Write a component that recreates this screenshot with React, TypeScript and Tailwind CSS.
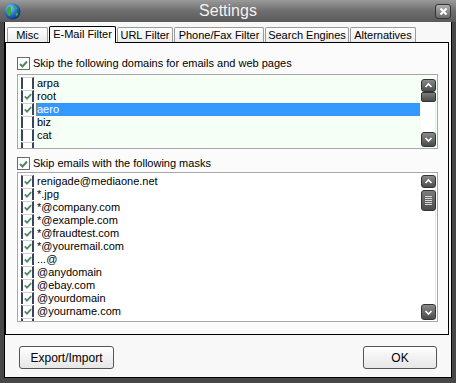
import React from 'react';

const font = "font-['Liberation_Sans',Arial,sans-serif]";

// last entry of each list is the row cut off by the list's bottom edge
const domains = ['arpa', 'root', 'aero', 'biz', 'cat', ''];
const domainChecks = [false, true, true, false, false, false];

const masks = [
    'renigade@mediaone.net',
    '*.jpg',
    '*@company.com',
    '*@example.com',
    '*@fraudtest.com',
    '*@youremail.com',
    '...@',
    '@anydomain',
    '@ebay.com',
    '@yourdomain',
    '@yourname.com',
    '',
];

const tabs = [
    { label: 'Misc', w: 'w-[41px]' },
    { label: 'E-Mail Filter', w: 'w-[67px]', active: true },
    { label: 'URL Filter', w: 'w-[56px]' },
    { label: 'Phone/Fax Filter', w: 'w-[90px]' },
    { label: 'Search Engines', w: 'w-[84px]' },
    { label: 'Alternatives', w: 'w-[66px]' },
];

function Tick({ small }: { small?: boolean }) {
    return small ? (
        <svg width="8" height="7" viewBox="0 0 8 7">
            <path d="M0.8 3.4 L3 5.6 L7.2 1.2" fill="none" stroke="#4f8a5f" strokeWidth="1.8" />
        </svg>
    ) : (
        <svg width="9" height="8" viewBox="0 0 9 8">
            <path d="M1 4 L3.5 6.5 L8 1.5" fill="none" stroke="#4f8a5f" strokeWidth="2" />
        </svg>
    );
}

function Globe() {
    return (
        <svg width="17" height="17" viewBox="0 0 17 17">
            <defs>
                <radialGradient id="g" cx="0.35" cy="0.3" r="0.75">
                    <stop offset="0" stopColor="#8fd0ff" />
                    <stop offset="0.5" stopColor="#2a78d0" />
                    <stop offset="1" stopColor="#0b2f78" />
                </radialGradient>
            </defs>
            <circle cx="8.5" cy="8.5" r="8" fill="url(#g)" />
            <path d="M3 6 C4 3 7 3 7 5 C8 7 6 8 7 10 C7 13 5 14 4 12 C3 10 2 8 3 6 Z" fill="#3faa3a" />
            <path d="M10 3 C12 3 14 5 13 6 C12 7 11 6 10 5 Z" fill="#3faa3a" />
            <path d="M12 10 C14 9 15 11 13 13 C12 14 11 12 12 10 Z" fill="#3faa3a" />
        </svg>
    );
}

function Chevron({ down }: { down?: boolean }) {
    return (
        <svg width="13" height="11" viewBox="0 0 13 11">
            <path
                d={down ? 'M3.5 4 L6.5 7 L9.5 4' : 'M3.5 7 L6.5 4 L9.5 7'}
                fill="none"
                stroke="#ffffff"
                strokeWidth="1.6"
            />
        </svg>
    );
}

function ScrollBtn({ down, h }: { down?: boolean; h: string }) {
    return (
        <div
            className={`${h} w-[15px] rounded-[3px] border border-[#333] bg-gradient-to-b from-[#8a8a8a] to-[#4c4c4c] flex items-center justify-center`}
        >
            <Chevron down={down} />
        </div>
    );
}

function ListCheck({ checked }: { checked: boolean }) {
    return (
        <div className="w-[13px] h-[12px] mb-[1px] border-x-2 border-[#3c4262] border-t border-t-[#d0d0d8] bg-white flex items-center justify-center shrink-0">
            {checked && <Tick small />}
        </div>
    );
}

function HeaderCheck({ label }: { label: string }) {
    return (
        <div className="flex items-center h-[13px] ml-[11px]">
            <div className="w-[13px] h-[13px] border border-[#6a6a6a] bg-white flex items-center justify-center">
                <Tick />
            </div>
            <span className="ml-[3px] text-[11px] leading-[13px] text-black">{label}</span>
        </div>
    );
}

interface ListProps {
    items: string[];
    checks: boolean[];
    selected?: number;
    bg: string;
    height: string;
    trackMt: string;
    thumb: React.ReactNode;
    downH: string;
}

function CheckList({ items, checks, selected, bg, height, trackMt, thumb, downH }: ListProps) {
    return (
        <div className={`${height} ml-[11px] mr-[10px] border border-[#a8a8a8] ${bg} flex overflow-hidden`}>
            <div className="flex-1 pl-[3px] pt-[2px] overflow-hidden">
                {items.map((item, i) => (
                    <div key={i} className="flex h-[13px] items-start">
                        <ListCheck checked={checks[i]} />
                        <div
                            className={`ml-[2px] flex-1 h-[13px] pl-[1px] text-[11px] leading-[13px] ${
                                i === selected
                                    ? 'bg-[#3399ff] text-white outline outline-1 outline-dotted outline-[#d07010] -outline-offset-1'
                                    : 'text-black'
                            }`}
                        >
                            {item}
                        </div>
                    </div>
                ))}
            </div>
            <div className={`w-[15px] ml-[1px] mr-[1px] ${trackMt} mb-[1px] bg-white border-r border-[#e8e8e8] flex flex-col justify-between`}>
                <div className="flex flex-col">
                    <ScrollBtn h="h-[13px]" />
                    {thumb}
                </div>
                <ScrollBtn down h={downH} />
            </div>
        </div>
    );
}

export default function App() {
    return (
        <div className={`${font} w-[456px] h-[383px] bg-[#474747] flex flex-col pb-[5px] select-none`}>
            {/* title bar */}
            <div className="h-[22px] shrink-0 bg-gradient-to-b from-[#9a9a9a] via-[#6e6e6e] to-[#5a5a5a] flex items-center relative">
                <div className="absolute left-[4px] top-[3px]">
                    <Globe />
                </div>
                <div className="flex-1 text-center text-[16px] leading-[22px] text-[#f2f2f2]">Settings</div>
                <div className="absolute left-[435px] top-[4px] w-[16px] h-[15px] rounded-[3px] border border-[#333] bg-gradient-to-b from-[#b0b0b0] to-[#6a6a6a] flex items-center justify-center">
                    <svg width="9" height="9" viewBox="0 0 9 9">
                        <path d="M1.5 1.5 L7.5 7.5 M7.5 1.5 L1.5 7.5" stroke="#fff" strokeWidth="2.2" />
                    </svg>
                </div>
            </div>

            {/* client */}
            <div className="flex-1 mx-[4px] border-x border-b border-black bg-[#f8f8f8] flex flex-col">
                {/* tabs */}
                <div className="flex gap-[1px] ml-[2px] mt-[4px] h-[16px] items-end relative z-10">
                    {tabs.map((t) =>
                        t.active ? (
                            <div
                                key={t.label}
                                className={`${t.w} h-[17px] -mb-[1px] border border-b-0 border-black rounded-t-[2px] bg-[#fbfbfb] text-[11px] leading-[15px] text-center text-black`}
                            >
                                {t.label}
                            </div>
                        ) : (
                            <div
                                key={t.label}
                                className={`${t.w} h-[15px] border border-b-0 border-[#9a9a9a] rounded-t-[2px] bg-gradient-to-b from-white to-[#ececec] text-[11px] leading-[14px] text-center text-black`}
                            >
                                {t.label}
                            </div>
                        )
                    )}
                </div>

                {/* panel */}
                <div className="h-[293px] mr-[2px] border border-black bg-[#fbfbfb] flex flex-col">
                    <div className="mt-[14px]">
                        <HeaderCheck label="Skip the following domains for emails and web pages" />
                    </div>
                    <div className="mt-[4px]">
                        <CheckList
                            items={domains}
                            checks={domainChecks}
                            selected={2}
                            bg="bg-[#f6fff6]"
                            height="h-[75px]"
                            trackMt="mt-[4px]"
                            downH="h-[15px]"
                            thumb={
                                <div className="h-[10px] w-[15px] rounded-[2px] border border-[#333] bg-gradient-to-b from-[#7c7c7c] to-[#4c4c4c]" />
                            }
                        />
                    </div>
                    <div className="mt-[8px]">
                        <HeaderCheck label="Skip emails with the following masks" />
                    </div>
                    <div className="mt-[2px]">
                        <CheckList
                            items={masks}
                            checks={masks.map((m) => m !== '')}
                            bg="bg-white"
                            height="h-[150px]"
                            trackMt="mt-[2px]"
                            downH="h-[16px]"
                            thumb={
                                <div className="mt-[2px] h-[21px] w-[15px] rounded-[3px] border border-[#333] bg-gradient-to-b from-[#7c7c7c] to-[#4c4c4c] flex flex-col items-center justify-center gap-[1px]">
                                    <div className="w-[7px] h-[1px] bg-[#d8d8d8]" />
                                    <div className="w-[7px] h-[1px] bg-[#d8d8d8]" />
                                    <div className="w-[7px] h-[1px] bg-[#d8d8d8]" />
                                    <div className="w-[7px] h-[1px] bg-[#d8d8d8]" />
                                    <div className="w-[7px] h-[1px] bg-[#d8d8d8]" />
                                </div>
                            }
                        />
                    </div>
                </div>

                {/* buttons */}
                <div className="flex justify-between mt-[11px] mx-[14px]">
                    <button className="w-[95px] h-[23px] rounded-[3px] border border-[#555] bg-gradient-to-b from-white to-[#e6e6e6] text-[12px] text-black">
                        Export/Import
                    </button>
                    <button className="w-[74px] h-[23px] rounded-[3px] border border-[#555] bg-gradient-to-b from-white to-[#e6e6e6] text-[12px] text-black">
                        OK
                    </button>
                </div>
            </div>
        </div>
    );
}
